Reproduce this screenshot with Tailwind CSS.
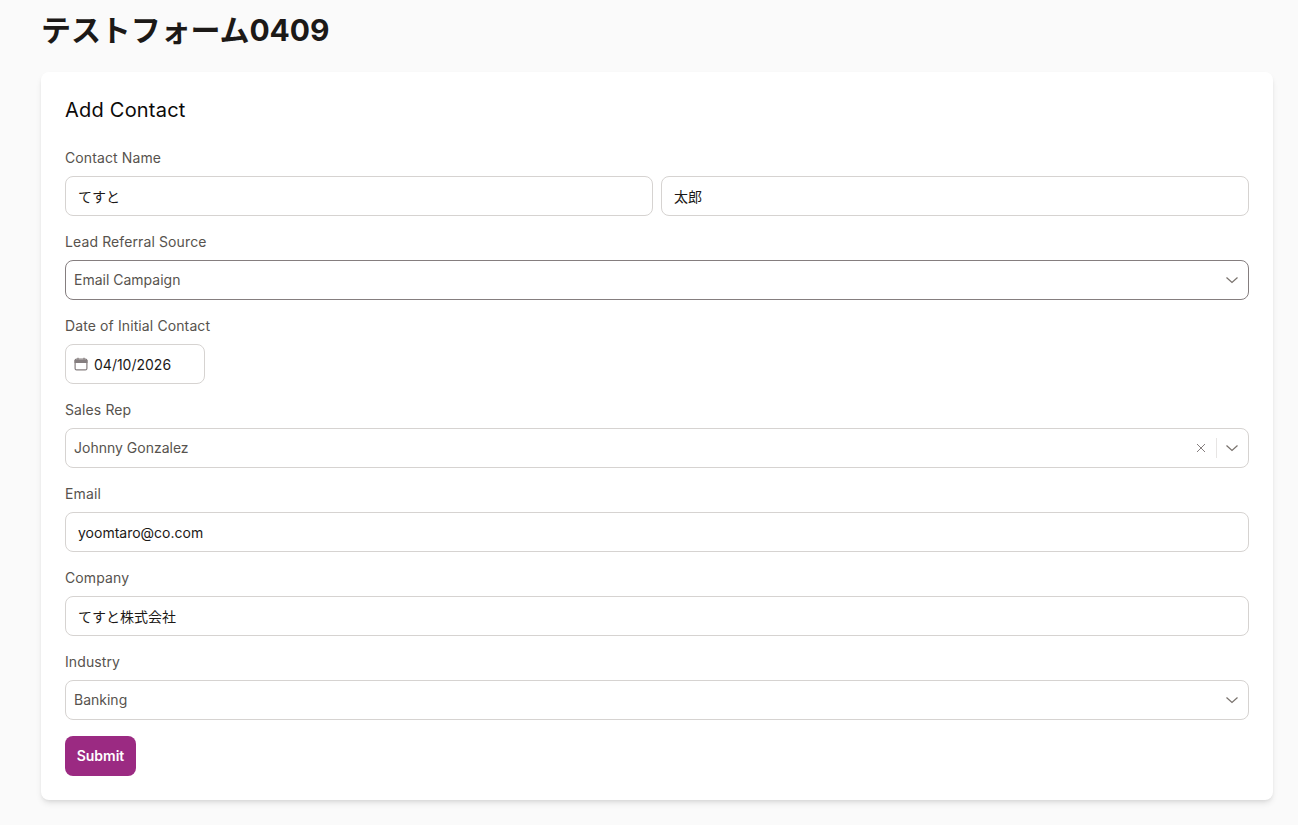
<!DOCTYPE html>
<html lang="ja">
<head>
    <meta charset="UTF-8">
    <meta name="viewport" content="width=device-width, initial-scale=1.0">
    <title>テストフォーム0409</title>
    <script src="https://cdn.jsdelivr.net/npm/@tailwindcss/browser@4"></script>
</head>
<body class="bg-[#fafafa] min-h-screen font-['Inter','Noto_Sans_CJK_JP',sans-serif]">

    <div class="pl-[41px] pr-[25px] pt-3">
        <h1 class="text-[30px] leading-9 font-bold text-[#1c1917] mb-6 tracking-[-0.003em]">テストフォーム0409</h1>

        <form class="bg-white rounded-lg shadow-md p-6">
            <h2 class="text-xl leading-7 font-normal text-[#0c0a09] mb-6 tracking-[0.011em]">Add Contact</h2>

            <div class="flex flex-col gap-4">
                <!-- Contact name -->
                <div>
                    <label class="block text-sm leading-5 font-normal tracking-[0.008em] text-[#57534e] mb-2">Contact Name</label>
                    <div class="flex gap-2">
                        <input type="text" value="てすと" class="w-full h-10 px-3 text-sm text-[#1c1917] bg-white border border-[#d6d3d1] rounded-lg">
                        <input type="text" value="太郎" class="w-full h-10 px-3 text-sm text-[#1c1917] bg-white border border-[#d6d3d1] rounded-lg">
                    </div>
                </div>

                <!-- Lead source -->
                <div>
                    <label class="block text-sm leading-5 font-normal tracking-[0.008em] text-[#57534e] mb-2">Lead Referral Source</label>
                    <div class="flex items-center justify-between h-10 px-2 bg-white border border-[#857e7f] rounded-lg">
                        <span class="text-sm text-[#57534e]">Email Campaign</span>
                        <svg class="w-4 h-4 text-[#78716c]" viewBox="0 0 16 16" fill="none" stroke="currentColor" stroke-width="1.2"><path d="M2.5 5.5 8 10.5l5.5-5"/></svg>
                    </div>
                </div>

                <!-- Date -->
                <div>
                    <label class="block text-sm leading-5 font-normal tracking-[0.008em] text-[#57534e] mb-2">Date of Initial Contact</label>
                    <div class="flex items-center gap-[6px] w-[140px] h-10 pl-2 bg-white border border-[#d6d3d1] rounded-lg">
                        <svg class="w-[14px] h-[14px] text-[#857e7f]" viewBox="0 0 14 14" fill="none" stroke="currentColor" stroke-width="1.2"><rect x="1.1" y="2.1" width="11.8" height="10.8" rx="1.5"/><path d="M1.1 3.5h11.8v2H1.1z" fill="currentColor"/><path d="M4 .8v2M10 .8v2"/></svg>
                        <span class="text-sm text-[#1c1917] pt-[2px]">04/10/2026</span>
                    </div>
                </div>

                <!-- Sales rep -->
                <div>
                    <label class="block text-sm leading-5 font-normal tracking-[0.008em] text-[#57534e] mb-2">Sales Rep</label>
                    <div class="flex items-center h-10 px-2 bg-white border border-[#d6d3d1] rounded-lg">
                        <span class="text-sm text-[#57534e] flex-1">Johnny Gonzalez</span>
                        <svg class="w-3 h-3 text-[#857e7f]" viewBox="0 0 12 12" fill="none" stroke="currentColor" stroke-width="1"><path d="M2 2l8 8M10 2l-8 8"/></svg>
                        <span class="w-px h-5 bg-[#e7e5e4] ml-[9px] mr-[7px]"></span>
                        <svg class="w-4 h-4 text-[#78716c]" viewBox="0 0 16 16" fill="none" stroke="currentColor" stroke-width="1.2"><path d="M2.5 5.5 8 10.5l5.5-5"/></svg>
                    </div>
                </div>

                <!-- Email -->
                <div>
                    <label class="block text-sm leading-5 font-normal tracking-[0.008em] text-[#57534e] mb-2">Email</label>
                    <input type="text" value="yoomtaro@co.com" class="w-full h-10 px-3 text-sm text-[#1c1917] bg-white border border-[#d6d3d1] rounded-lg">
                </div>

                <!-- Company -->
                <div>
                    <label class="block text-sm leading-5 font-normal tracking-[0.008em] text-[#57534e] mb-2">Company</label>
                    <input type="text" value="てすと株式会社" class="w-full h-10 px-3 text-sm text-[#1c1917] bg-white border border-[#d6d3d1] rounded-lg">
                </div>

                <!-- Industry -->
                <div>
                    <label class="block text-sm leading-5 font-normal tracking-[0.008em] text-[#57534e] mb-2">Industry</label>
                    <div class="flex items-center justify-between h-10 px-2 bg-white border border-[#d6d3d1] rounded-lg">
                        <span class="text-sm text-[#57534e]">Banking</span>
                        <svg class="w-4 h-4 text-[#78716c]" viewBox="0 0 16 16" fill="none" stroke="currentColor" stroke-width="1.2"><path d="M2.5 5.5 8 10.5l5.5-5"/></svg>
                    </div>
                </div>

                <div>
                    <button type="button" class="h-10 w-[71px] bg-[#9b2a82] text-white text-sm font-semibold rounded-lg">Submit</button>
                </div>
            </div>
        </form>
    </div>

</body>
</html>
